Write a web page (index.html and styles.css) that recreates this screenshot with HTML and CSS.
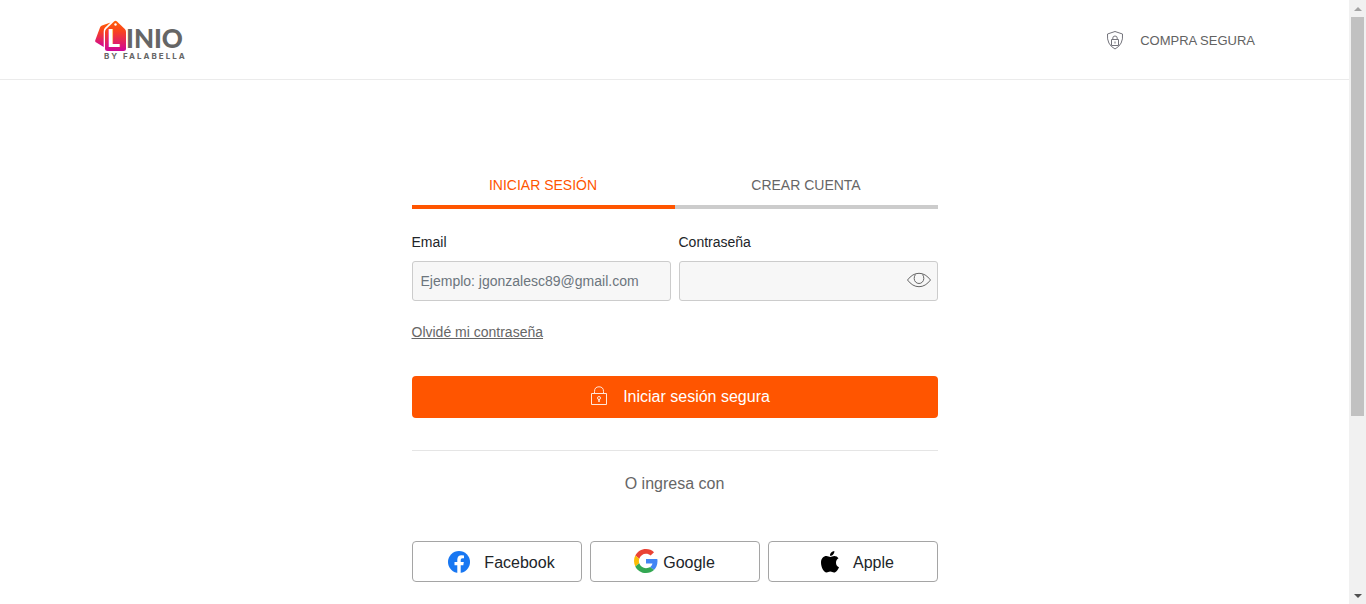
FILE: index.html
```html
<!DOCTYPE html>
<html lang="es">
<head>
<meta charset="utf-8">
<meta name="viewport" content="width=device-width, initial-scale=1">
<title>Linio - Iniciar sesión</title>
<link rel="stylesheet" href="styles.css">
</head>
<body class="shell">
<div class="page">
  <header class="header">
    <a class="logo" href="#" aria-label="Linio by Falabella">
      <svg width="96" height="42" viewBox="0 0 96 42">
        <defs>
          <linearGradient id="tag" x1="0" y1="0" x2="0" y2="1">
            <stop offset="0" stop-color="#ff5f05"/>
            <stop offset=".35" stop-color="#f9431f"/>
            <stop offset="1" stop-color="#cf0699"/>
          </linearGradient>
        </defs>
        <path fill="url(#tag)" d="M15.500 3.500 7 6.500Q5.500 7 5 8.500L.200 21.500Q-.100 23 1.300 23.600L8.700 28V12.500Q8.700 10 10 8.700Z"/>
        <path fill="url(#tag)" d="M19.300 2.300Q20.500 1.300 21.700 2.300L29.800 10Q31 11.200 31 13V29.500Q31 32 28.500 32H12.500Q10 32 10 29.500V13Q10 11.200 11.200 10Z"/>
        <circle cx="20.500" cy="5.500" r="1.200" fill="#fff"/>
        <text class="logo-l" x="12" y="28">L</text>
        <text class="logo-name" x="31" y="29">INIO</text>
        <text class="logo-by" x="9" y="40">BY FALABELLA</text>
      </svg>
    </a>
    <div class="secure">
      <svg width="18" height="20" viewBox="0 0 18 20" fill="none" stroke="#74747c">
        <path d="M9 .500 16.500 3Q17.500 13.500 9 18Q.500 13.500 1.500 3Z"/>
        <path d="M5.500 8.500h7v6h-7zM6.800 8.500V7Q6.800 5 9 5T11.200 7V8.500M9 10.500v2"/>
      </svg>
      <span>COMPRA SEGURA</span>
    </div>
  </header>

  <main class="login">
    <nav class="tabs">
      <a class="tab tab-active" href="#">INICIAR SESIÓN</a>
      <a class="tab" href="#">CREAR CUENTA</a>
    </nav>
    <form>
      <div class="fields">
        <div class="field">
          <label for="email">Email</label>
          <input class="input" id="email" type="email" placeholder="Ejemplo: jgonzalesc89@gmail.com">
        </div>
        <div class="field">
          <label for="password">Contraseña</label>
          <div class="password">
            <input class="input" id="password" type="password">
            <button class="reveal" type="button" aria-label="Mostrar contraseña">
              <svg width="24" height="16" viewBox="0 0 24 16" fill="none" stroke="#666">
                <path d="M.500 8Q5.500 1.300 12 1.300T23.500 8Q18.500 14.700 12 14.700T.500 8Z"/>
                <path d="M8.500 2.500Q7.200 4 7.200 6.500A4.800 5 0 0 0 16.800 6.500Q16.800 4 15.500 2.500"/>
              </svg>
            </button>
          </div>
        </div>
      </div>
      <a class="forgot" href="#">Olvidé mi contraseña</a>
      <button class="submit" type="submit">
        <svg width="16" height="24" viewBox="0 0 16 24" fill="none" stroke="#ffe6d9">
          <path d="M.500 8.500h15v11H.500zM3.500 8.500V6.500Q3.500 1.800 8 1.800T12.500 6.500V8.500"/>
          <path d="M8 14v3" stroke-width="1.500"/><circle cx="8" cy="13" r="1.500"/>
        </svg>
        Iniciar sesión segura
      </button>
    </form>
    <p class="alternative">O ingresa con</p>
    <div class="social">
      <button class="provider provider-wide" type="button">
        <svg width="22" height="24" viewBox="0 0 22 24">
          <circle cx="11" cy="11" r="11" fill="#1877f2"/>
          <path fill="#fff" d="M9.300 21.900V14.200H6.500V11H9.300V8.600C9.300 5.800 11 4.300 13.500 4.300Q14.700 4.300 16 4.500V7.200H14.600C13.200 7.200 12.700 8.100 12.700 9V11H15.800L15.300 14.200H12.700V21.900Z"/>
        </svg>
        Facebook
      </button>
      <button class="provider" type="button">
        <svg width="24" height="28" viewBox="0 0 48 56">
          <path fill="#ea4335" d="M24 9.500c3.540 0 6.710 1.220 9.210 3.600l6.850-6.850C35.900 2.380 30.470 0 24 0 14.620 0 6.510 5.380 2.560 13.220l7.980 6.190C12.430 13.720 17.740 9.500 24 9.500z"/>
          <path fill="#4285f4" d="M46.980 24.550c0-1.570-.150-3.090-.380-4.550H24v9.020h12.940c-.580 2.960-2.260 5.480-4.780 7.180l7.730 6c4.510-4.180 7.090-10.360 7.090-17.650z"/>
          <path fill="#fbbc05" d="M10.530 28.590A14.500 14.500 0 0 1 9.770 24c0-1.600.270-3.140.760-4.590l-7.980-6.190A24 24 0 0 0 0 24c0 3.880.920 7.540 2.560 10.780z"/>
          <path fill="#34a853" d="M24 48c6.480 0 11.930-2.130 15.890-5.810l-7.730-6c-2.150 1.450-4.920 2.300-8.160 2.300-6.260 0-11.570-4.220-13.470-9.910l-7.980 6.190C6.510 42.620 14.620 48 24 48z"/>
        </svg>
        Google
      </button>
      <button class="provider provider-wide" type="button">
        <svg width="18" height="24" viewBox="0 0 18 24">
          <path d="M15 11.700C15 9.600 16 8.200 17.500 7.200Q16 5 13.300 5C11.500 5 10.500 6 9.300 6S7 5 5.500 5C2.500 5 0 7.500 0 11.500C0 16 2.700 21.500 5.500 21.500C7 21.500 7.600 20.600 9.300 20.600S11.500 21.500 13 21.500C15.300 21.500 17 18.500 18 16.200C16 15.400 15 13.600 15 11.700ZM9 4.800C11.500 5 13.700 2.500 13.300 0C11 .200 8.800 2.300 9 4.800Z"/>
        </svg>
        Apple
      </button>
    </div>
  </main>
</div>
<div class="scrollbar" aria-hidden="true">
  <span class="arrow arrow-up"></span>
  <span class="track"><span class="thumb"></span></span>
  <span class="arrow arrow-down"></span>
</div>
</body>
</html>
```
FILE: styles.css
```css
* {
  box-sizing: border-box;
}

.shell {
  display: flex;
  height: 100vh;
  margin: 0;
  overflow: hidden;
  background: #fff;
  color: #212529;
  font: 14px/20px "Liberation Sans", Arial, sans-serif;
}

.page {
  flex: 1;
  min-width: 0;
}

.page svg {
  display: block;
  flex: none;
}

.header {
  display: flex;
  align-items: center;
  justify-content: space-between;
  height: 80px;
  padding: 0 94px;
  border-bottom: 1px solid #ebebeb;
}

.logo {
  padding-left: 1px;
}

.logo-l {
  fill: #fff;
  font: 900 25px Lato, sans-serif;
}

.logo-name {
  fill: #666;
  font: 900 26px Lato, sans-serif;
}

.logo-by {
  fill: #666;
  font: 700 8px Inter, sans-serif;
  letter-spacing: 2px;
}

.secure {
  display: flex;
  align-items: center;
  gap: 16px;
  padding-top: 2px;
  color: #626262;
  font-size: 13px;
}

.login {
  max-width: 526px;
  margin: 0 auto;
  padding-top: 95px;
}

.tabs {
  display: grid;
  grid-template-columns: 1fr 1fr;
}

.tab {
  padding-bottom: 10px;
  border-bottom: 4px solid #ccc;
  color: #666;
  text-align: center;
  text-decoration: none;
}

.tab-active {
  border-color: #ff5500;
  color: #ff5500;
}

.fields {
  display: grid;
  grid-template-columns: 1fr 1fr;
  gap: 8px;
  margin: 23px 0 21px;
}

.field label {
  display: block;
  margin-bottom: 9px;
}

.input {
  display: block;
  width: 100%;
  height: 40px;
  padding: 0 8px;
  border: 1px solid #ccc;
  border-radius: 3px;
  background: #f7f7f7;
  color: #212529;
  font: inherit;
}

.input::placeholder {
  color: #6c757d;
}

.password {
  position: relative;
}

.reveal {
  position: absolute;
  top: 11px;
  right: 7px;
  padding: 0;
  border: 0;
  background: none;
}

.forgot {
  color: #666;
}

.submit {
  display: flex;
  align-items: center;
  justify-content: center;
  gap: 16px;
  width: 100%;
  height: 42px;
  margin: 34px 0 32px;
  padding: 0 0 0 12px;
  border: 0;
  border-radius: 4px;
  background: #ff5500;
  color: #fff;
  font: inherit;
  font-size: 16px;
}

.alternative {
  margin: 0;
  padding: 23px 0 47px;
  border-top: 1px solid #e5e5e5;
  color: #666;
  font-size: 16px;
  text-align: center;
}

.social {
  display: grid;
  grid-template-columns: repeat(3, 1fr);
  gap: 8px;
}

.provider {
  display: flex;
  align-items: center;
  justify-content: center;
  gap: 5px;
  height: 41px;
  padding: 2px 0 0;
  border: 1px solid #a5a5a5;
  border-radius: 4px;
  background: #fff;
  color: #212529;
  font: inherit;
  font-size: 16px;
}

.provider-wide {
  gap: 14px;
  padding-left: 10px;
}

.scrollbar {
  display: flex;
  flex-direction: column;
  width: 17px;
  background: #f1f1f1;
}

.arrow {
  display: grid;
  place-items: center;
  height: 17px;
}

.arrow::before {
  content: "";
  border: 4px solid transparent;
  border-top-width: 0;
}

.arrow-up::before {
  border-bottom-color: #a3a3a3;
}

.arrow-down::before {
  border-top: 4px solid #505050;
  border-bottom-width: 0;
}

.track {
  flex: 1;
  padding: 0 2px;
}

.thumb {
  display: block;
  height: 70%;
  background: #c1c1c1;
}
```
